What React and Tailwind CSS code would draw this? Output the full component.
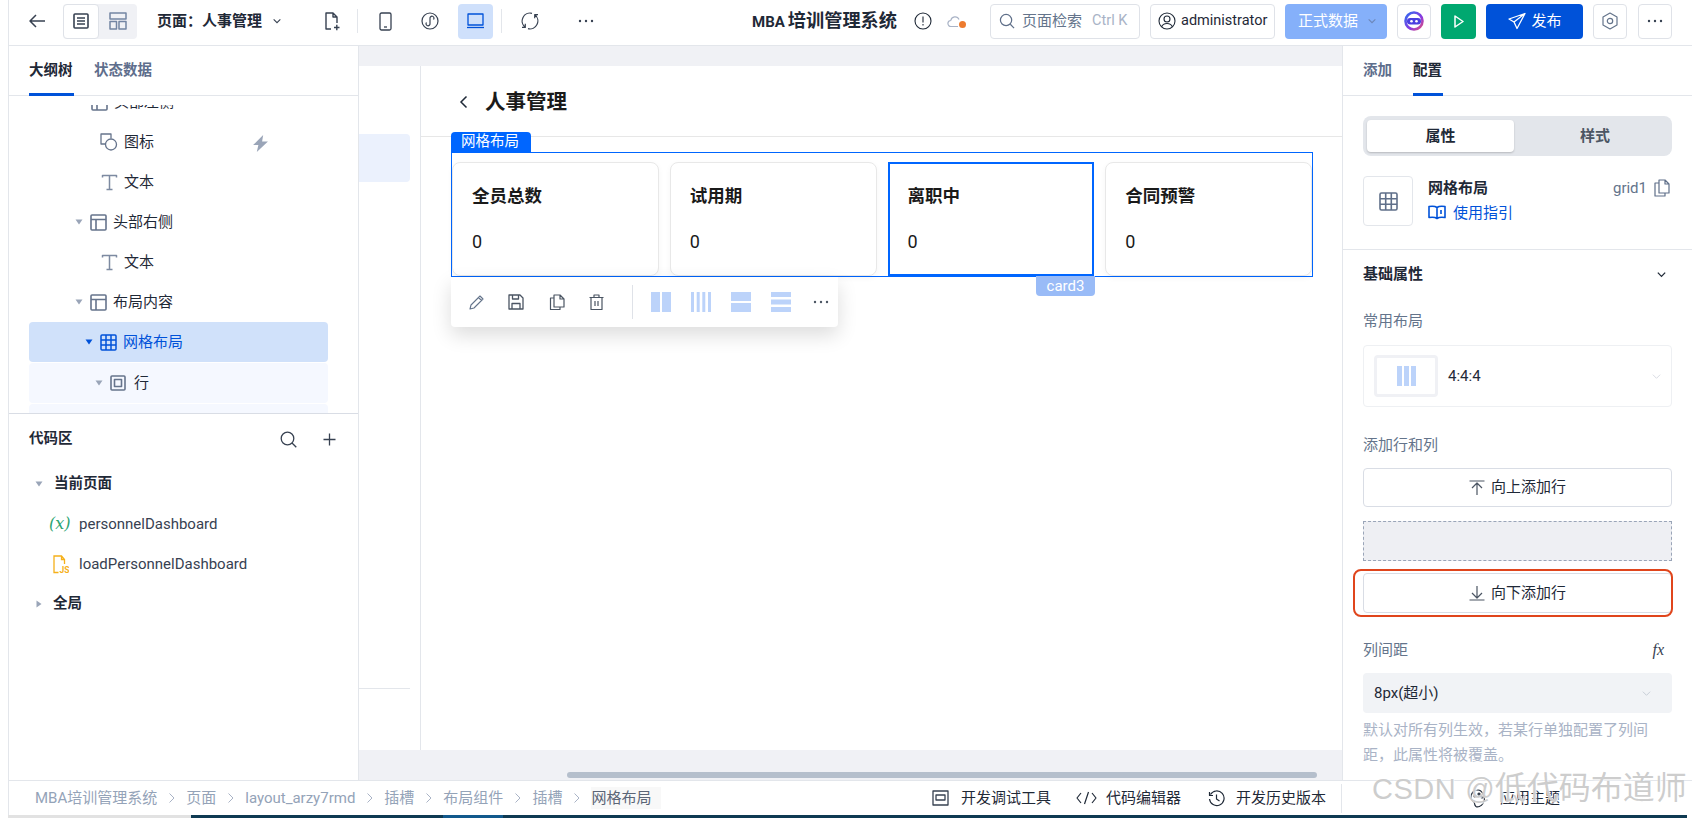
import React from "react";

const S = ({ w = 20, h, c = "#1f2937", sw = 1.5, vb = "0 0 24 24", children, className = "" }) => (
  <svg width={w} height={h || w} viewBox={vb} fill="none" stroke={c} strokeWidth={sw} strokeLinecap="butt" strokeLinejoin="round" className={`shrink-0 ${className}`}>
    {children}
  </svg>
);

const Caret = ({ c = "#9aa5b8" }) => (
  <svg width="8" height="6" viewBox="0 0 8 6" className="shrink-0"><path d="M0.5 0.5h7L4 5.5z" fill={c} /></svg>
);
const CaretR = () => (
  <svg width="6" height="8" viewBox="0 0 6 8" className="shrink-0"><path d="M0.5 0.5v7L5.5 4z" fill="#9aa5b8" /></svg>
);
const Chev = ({ w = 12, c = "#374151", sw = 1.3 }) => (
  <svg width={w} height={w} viewBox="0 0 12 12" fill="none" stroke={c} strokeWidth={sw} className="shrink-0"><path d="M2 4l4 4 4-4" /></svg>
);
const BreadSep = () => (
  <svg width="8" height="12" viewBox="0 0 8 12" fill="none" stroke="#a9b3c6" strokeWidth="1" className="shrink-0"><path d="M1.5 1.5L6 6l-4.5 4.5" /></svg>
);

const PanelIcon = () => (
  <S w={17} c="#66748c" sw={1.6} vb="0 0 17 17">
    <rect x="1" y="1" width="15" height="15" rx="1" /><path d="M1 5.5h15M6 5.5V16" />
  </S>
);
const TIcon = () => (
  <S w={17} c="#7d8aa1" sw={1.5} vb="0 0 17 17"><path d="M1.5 3.5V1.5h14v2M8.5 1.5v14M5.5 15.5h6" /></S>
);
const GridIcon = ({ c = "#0052d9", w = 17 }) => (
  <S w={w} c={c} sw={1.5} vb="0 0 17 17">
    <rect x="1" y="1" width="15" height="15" rx="1" /><path d="M1 6h15M1 11h15M6 1v15M11 1v15" />
  </S>
);

const TreeRow = ({ pl, caret, icon, label, active, tint, right, gap = 6 }) => (
  <div className={`relative h-10 flex items-center ml-5 mr-[30px] rounded ${active ? "bg-[#d0e1fa] text-[#0052d9]" : tint ? "bg-[#f5f8ff]" : ""}`} style={{ paddingLeft: pl }}>
    {caret !== undefined && <span className="w-[8px] mr-[7px] flex items-center">{caret}</span>}
    {icon}
    <span style={{ marginLeft: gap }}>{label}</span>
    {right}
  </div>
);

const TopBtn = ({ className = "", children }) => (
  <div className={`h-[35px] flex items-center justify-center rounded shrink-0 ${className}`}>{children}</div>
);

const ToolBlock = ({ children }) => (
  <svg width="20" height="20" viewBox="0 0 20 20" fill="#bcd3fa" className="shrink-0">{children}</svg>
);

const Card = ({ title, selected }) => (
  <div className={`h-[114px] bg-white ${selected ? "border-2 border-[#0066ff] pl-[18px] pr-5 pt-[18px]" : "px-[19px] pt-[19px] rounded-lg border border-[#e8e8e8] shadow-[0_2px_6px_rgba(0,0,0,0.04)]"}`}>
    <div className="text-[17.5px] leading-[28px] font-bold text-[#1a1a1a]">{title}</div>
    <div className="mt-[18px] text-[18px] leading-[28px] text-[#1a1a1a]">0</div>
  </div>
);

export default function App() {
  return (
    <div className="relative w-[1692px] h-[818px] overflow-hidden bg-white flex flex-col text-[15px] text-[#1f2937]" style={{ fontFamily: 'Roboto, "Noto Sans CJK SC", sans-serif' }}>
      <div className="h-[815px] flex shrink-0">
        <div className="w-2 shrink-0 bg-white" />
        <div className="flex-1 min-w-0 flex flex-col border-l border-[#e3e6eb]">
          {/* top bar */}
          <header className="h-[46px] shrink-0 border-b border-[#e3e6eb] flex items-center pb-[3px]">
            <span className="ml-[19px]">
              <S w={18} c="#374151" sw={1.5} vb="0 0 18 18"><path d="M17 9H2M8 3L2 9l6 6" /></S>
            </span>
            <div className="ml-[17px] flex h-[35px] w-[74px] bg-[#f0f1f5] rounded">
              <div className="w-[36px] bg-white border border-[#dfe2e8] rounded flex items-center justify-center">
                <S w={16} c="#374151" sw={1.6} vb="0 0 16 16"><rect x="1" y="1" width="14" height="14" rx="1" /><path d="M4 5h8M4 8h8M4 11h8" /></S>
              </div>
              <div className="w-[38px] flex items-center justify-center">
                <S w={18} c="#7385a3" sw={1.5} vb="0 0 18 18"><rect x="1" y="1" width="16" height="6" /><rect x="1" y="9.5" width="6.5" height="7.5" /><rect x="10" y="9.5" width="7" height="7.5" /></S>
              </div>
            </div>
            <div className="ml-[20px] font-semibold text-[15px] text-[#1f2937]">页面：人事管理</div>
            <span className="ml-[10px]"><Chev w={10} /></span>
            <span className="ml-[42px]">
              <S w={16} h={19} c="#374151" sw={1.4} vb="0 0 16 19"><path d="M7 17H2V1h7l4 4v6M9 1v4h4M10 15.5h5.5M12.8 12.8v5.5" /></S>
            </span>
            <span className="ml-[17px] w-px h-6 bg-[#e3e6eb]" />
            <span className="ml-[21px]">
              <S w={13} h={19} c="#374151" sw={1.3} vb="0 0 13 19"><rect x="1" y="1" width="11" height="17" rx="1.5" /><path d="M5 15h3" /></S>
            </span>
            <span className="ml-[29px]">
              <S w={18} c="#374151" sw={1.2} vb="0 0 18 18"><circle cx="9" cy="9" r="8" /><path d="M5.5 10.5a2 2 0 1 0 3.5 1V6.5a2 2 0 1 1 3.5 1" /></S>
            </span>
            <TopBtn className="ml-[19px] w-[35px] bg-[#cfe0fb]">
              <S w={19} h={16} c="#0052d9" sw={1.3} vb="0 0 19 16"><rect x="2" y="1" width="15" height="11" /><path d="M1 14.5h17" /></S>
            </TopBtn>
            <span className="ml-[8px] w-px h-6 bg-[#e3e6eb]" />
            <span className="ml-[19px]">
              <S w={18} c="#374151" sw={1.2} vb="0 0 18 18"><path d="M11 1.3A8 8 0 0 0 4 15.2M4.3 11.8v3.6H1M7 16.7A8 8 0 0 0 14 2.8M13.7 6.2V2.6H17" /></S>
            </span>
            <span className="ml-[39px]">
              <svg width="16" height="4" viewBox="0 0 16 4" fill="#374151"><circle cx="2" cy="2" r="1.2" /><circle cx="8" cy="2" r="1.2" /><circle cx="14" cy="2" r="1.2" /></svg>
            </span>
            <div className="ml-[158px] font-bold text-[18.2px] text-[#1f2937] w-[147px] whitespace-nowrap flex items-baseline">
              <span className="text-[15px] mr-[3px]">MBA</span>培训管理系统
            </div>
            <span className="ml-[15px]">
              <S w={18} c="#1f2937" sw={1.1} vb="0 0 18 18"><circle cx="9" cy="9" r="8" /><path d="M9 4.5v6M9 12v1.5" /></S>
            </span>
            <span className="ml-[15px] relative">
              <S w={17} h={14} c="#a9b3c6" sw={1.2} vb="0 0 17 14"><path d="M11 12.5H4A3 3 0 0 1 3.8 6.5 4.3 4.3 0 0 1 12 5.5" /></S>
              <span className="absolute right-[-2px] bottom-0 w-[7px] h-[7px] rounded-full bg-[#ed7b2f]" />
            </span>
            <div className="ml-[26px] w-[150px] h-[35px] rounded border border-[#dfe2e8] flex items-center pl-[8px] shrink-0">
              <S w={16} c="#5f6f89" sw={1.3} vb="0 0 17 17"><circle cx="7.5" cy="7.5" r="6" /><path d="M12 12l4 4" /></S>
              <span className="ml-[7px] text-[15px] text-[#64748b]">页面检索</span>
              <span className="ml-[10px] text-[14.5px] text-[#a9b3c6] whitespace-nowrap">Ctrl K</span>
            </div>
            <div className="ml-[10px] w-[125px] h-[35px] rounded border border-[#dfe2e8] flex items-center pl-[7px] shrink-0">
              <S w={18} c="#1f2937" sw={1.1} vb="0 0 18 18"><circle cx="9" cy="9" r="8" /><circle cx="9" cy="7" r="3" /><path d="M3.5 15c1-2.6 3-3.5 5.5-3.5s4.5.9 5.5 3.5" /></S>
              <span className="ml-[5px] text-[14.5px] text-[#1f2937]">administrator</span>
            </div>
            <div className="ml-[10px] w-[102px] h-[35px] rounded bg-[#85b0fa] flex items-center pl-[13px] shrink-0 text-white text-[15px]">
              正式数据
              <span className="ml-[9px]"><Chev w={10} c="#6c86b8" /></span>
            </div>
            <div className="ml-[10px] w-[34px] h-[35px] rounded border border-[#dfe2e8] flex items-center justify-center shrink-0">
              <svg width="20" height="20" viewBox="0 0 20 20">
                <defs><linearGradient id="rb" x1="0" y1="0" x2="1" y2="1"><stop offset="0" stopColor="#2f6df0" /><stop offset="0.6" stopColor="#8a3ae0" /><stop offset="1" stopColor="#e0507a" /></linearGradient></defs>
                <circle cx="10" cy="10" r="8.5" fill="white" stroke="url(#rb)" strokeWidth="2.6" />
                <rect x="3" y="7" width="14" height="6.5" rx="3.2" fill="#4a3fe0" />
                <circle cx="7.5" cy="10.2" r="1.3" fill="white" /><circle cx="12.5" cy="10.2" r="1.3" fill="white" />
              </svg>
            </div>
            <div className="ml-[10px] w-[35px] h-[35px] rounded bg-[#00a870] flex items-center justify-center shrink-0">
              <S w={10} h={13} c="white" sw={1.5} vb="0 0 10 13"><path d="M1 1l8 5.5L1 12z" /></S>
            </div>
            <div className="ml-[10px] w-[97px] h-[35px] rounded bg-[#0052d9] flex items-center justify-center shrink-0 text-white text-[15px]">
              <S w={18} c="white" sw={1.3} vb="0 0 18 18"><path d="M17 1.5L1 7l5 3 3 6.5zM17 1.5L6 10" /></S>
              <span className="ml-[6px]">发布</span>
            </div>
            <div className="ml-[10px] w-[34px] h-[35px] rounded border border-[#dfe2e8] flex items-center justify-center shrink-0">
              <S w={18} c="#64748b" sw={1.2} vb="0 0 18 18"><path d="M9 1l7 4v8l-7 4-7-4V5z" /><circle cx="9" cy="9" r="2.7" /></S>
            </div>
            <div className="ml-[11px] w-[34px] h-[35px] rounded border border-[#dfe2e8] flex items-center justify-center shrink-0">
              <svg width="16" height="4" viewBox="0 0 16 4" fill="#374151"><circle cx="2" cy="2" r="1.2" /><circle cx="8" cy="2" r="1.2" /><circle cx="14" cy="2" r="1.2" /></svg>
            </div>
          </header>

          {/* middle */}
          <div className="flex-1 min-h-0 flex">
            {/* left */}
            <aside className="w-[350px] shrink-0 border-r border-[#e3e6eb] flex flex-col bg-white">
              <div className="h-[50px] shrink-0 border-b border-[#e3e6eb] flex px-5 gap-[20px]">
                <div className="h-[50px] pt-[14px] w-[45px] border-b-[3px] border-[#0052d9] font-bold text-[14.5px] text-[#1f2937] leading-[22px] whitespace-nowrap">大纲树</div>
                <div className="pt-[14px] font-semibold text-[14.5px] text-[#5e6e8c] leading-[22px] whitespace-nowrap">状态数据</div>
              </div>
              <div className="mt-[9px] h-[308px] shrink-0 overflow-hidden">
                <div className="-mt-[23px]">
                  <TreeRow pl={62} icon={<PanelIcon />} label="头部左侧" />
                  <TreeRow pl={71} icon={
                    <S w={18} c="#66748c" sw={1.3} vb="0 0 18 18"><path d="M11 5.5V1H1v10h4.5" /><circle cx="11" cy="11.5" r="5.5" /></S>
                  } label="图标" right={
                    <svg width="17" height="17" viewBox="0 0 16 16" fill="#9aa5b8" className="absolute left-[223px] top-[13px]"><path d="M10.5 0L1 9.5h5L4.5 16 15 6H9.5z" /></svg>
                  } />
                  <TreeRow pl={72} icon={<TIcon />} label="文本" />
                  <TreeRow pl={46} caret={<Caret />} icon={<PanelIcon />} label="头部右侧" />
                  <TreeRow pl={72} icon={<TIcon />} label="文本" />
                  <TreeRow pl={46} caret={<Caret />} icon={<PanelIcon />} label="布局内容" />
                  <TreeRow pl={56} caret={<Caret c="#0052d9" />} icon={<GridIcon />} label="网格布局" active />
                  <div className="h-px" />
                  <TreeRow pl={66} gap={8} caret={<Caret />} icon={
                    <S w={16} c="#66748c" sw={1.6} vb="0 0 16 16"><rect x="1" y="1" width="14" height="14" rx="1" /><rect x="4.5" y="4.5" width="7" height="7" /></S>
                  } label="行" tint />
                  <div className="h-10 ml-5 mr-[30px] mt-px rounded bg-[#f5f8ff]" />
                </div>
              </div>
              <div className="flex-1 min-h-0 border-t border-[#d9dde5] px-5">
                <div className="h-[50px] flex items-center justify-between">
                  <span className="font-bold text-[14.5px]">代码区</span>
                  <span className="flex items-center gap-[26px] pr-[2px]">
                    <S w={17} c="#374151" sw={1.3} vb="0 0 17 17"><circle cx="7.5" cy="7.5" r="6.3" /><path d="M12 12l4.3 4.3" /></S>
                    <S w={13} c="#374151" sw={1.3} vb="0 0 13 13"><path d="M6.5 0.5v12M0.5 6.5h12" /></S>
                  </span>
                </div>
                <div className="h-10 flex items-center font-bold text-[14.5px] pl-[6px]">
                  <Caret /><span className="ml-[11px]">当前页面</span>
                </div>
                <div className="h-10 flex items-center">
                  <span className="w-[50px] pl-[20px] text-[#2ba471] italic text-[16px] whitespace-nowrap" style={{ fontFamily: '"DejaVu Serif", serif' }}>(x)</span>
                  <span className="text-[15px] text-[#374151]">personnelDashboard</span>
                </div>
                <div className="h-10 flex items-center">
                  <span className="w-[50px] pl-[24px] flex">
                    <svg width="16" height="19" viewBox="0 0 16 19" fill="none" stroke="#f5b01a" strokeWidth="1.3">
                      <path d="M5.5 17.5H1V1h7.5l3 3.5V9M8.5 1v3.5h3" />
                      <text x="6.5" y="17.5" fontSize="8.5" fill="#f5b01a" stroke="none" fontWeight="700" fontFamily="Roboto">JS</text>
                    </svg>
                  </span>
                  <span className="text-[15px] text-[#374151]">loadPersonnelDashboard</span>
                </div>
                <div className="h-10 flex items-center font-bold text-[14.5px] pl-[7px]">
                  <CaretR /><span className="ml-[11px]">全局</span>
                </div>
              </div>
            </aside>

            {/* canvas */}
            <main className="flex-1 min-w-0 bg-[#f0f1f5] flex flex-col pt-[20px]">
              <div className="h-[684px] shrink-0 bg-white flex">
                <div className="w-[62px] shrink-0 border-r border-[#e3e6eb] flex flex-col">
                  <div className="mt-[68px] h-[48px] w-[51px] bg-[#ebf1fd] rounded-r" />
                  <div className="mt-[506px] h-px w-[51px] bg-[#e3e6eb]" />
                </div>
                <div className="flex-1 min-w-0">
                  <div className="h-[71px] border-b border-[#e7e7e7] flex items-center pl-[38px] pt-[2px]">
                    <svg width="10" height="14" viewBox="0 0 10 14" fill="none" stroke="#1f2937" strokeWidth="1.5"><path d="M7.5 1.5L2 7l5.5 5.5" /></svg>
                    <span className="ml-[16px] text-[20.5px] font-bold text-[#1a1a1a]">人事管理</span>
                  </div>
                  <div className="ml-[30px] mt-[15px] relative w-[862px] h-[125px] border border-[#0066ff] pt-[9px]">
                    <div className="absolute left-[-1px] top-[-21px] w-[80px] h-[20px] bg-[#0066ff] rounded-t text-white text-[14.5px] leading-[20px] text-center pr-[2px]">网格布局</div>
                    <div className="grid grid-cols-4 gap-[11px]">
                      <Card title="全员总数" />
                      <Card title="试用期" />
                      <Card title="离职中" selected />
                      <Card title="合同预警" />
                    </div>
                    <div className="absolute left-[584px] top-[123px] w-[59px] h-[20px] bg-[#99bbf7] rounded-b text-white text-[15px] leading-[20px] text-center">card3</div>
                    <div className="absolute left-[-1px] top-[124px] w-[387px] h-[50px] bg-white rounded-b shadow-[0_8px_20px_rgba(0,0,0,0.14)] flex items-center">
                      <span className="ml-[18px]">
                        <S w={15} c="#64748b" sw={1.1} vb="0 0 15 15"><path d="M1 14l1-4L11 1l3 3-9 9zM9.5 2.5l3 3" /></S>
                      </span>
                      <span className="ml-[24px]">
                        <S w={16} c="#4b5563" sw={1.3} vb="0 0 16 16"><path d="M1 1h11l3 3v11H1zM4.5 1v4h6V1M4 15v-5.5h8V15" /></S>
                      </span>
                      <span className="ml-[25px]">
                        <S w={16} c="#4b5563" sw={1.2} vb="0 0 16 16"><path d="M5 1h6l4 4v8H5zM11 1v4h4M5 4H1.5v11.5H11V13" /></S>
                      </span>
                      <span className="ml-[24px]">
                        <S w={15} h={16} c="#4b5563" sw={1.2} vb="0 0 15 16"><path d="M0.5 3.5h14M2 3.5V15.5h11V3.5M5 3.5V1h5v2.5M6 7v5M9 7v5" /></S>
                      </span>
                      <span className="ml-[28px] w-px h-[34px] bg-[#dfe2e8]" />
                      <span className="ml-[18px]"><ToolBlock><rect x="0" y="0" width="9" height="20" /><rect x="11" y="0" width="9" height="20" /></ToolBlock></span>
                      <span className="ml-[20px]"><ToolBlock><rect x="0" y="0" width="3" height="20" /><rect x="5.7" y="0" width="3" height="20" /><rect x="11.3" y="0" width="3" height="20" /><rect x="17" y="0" width="3" height="20" /></ToolBlock></span>
                      <span className="ml-[20px]"><ToolBlock><rect x="0" y="0" width="20" height="9" /><rect x="0" y="11" width="20" height="9" /></ToolBlock></span>
                      <span className="ml-[20px]"><ToolBlock><rect x="0" y="0" width="20" height="5" /><rect x="0" y="7.5" width="20" height="5" /><rect x="0" y="15" width="20" height="5" /></ToolBlock></span>
                      <span className="ml-[22px]">
                        <svg width="16" height="4" viewBox="0 0 16 4" fill="#4b5563"><circle cx="2" cy="2" r="1.2" /><circle cx="8" cy="2" r="1.2" /><circle cx="14" cy="2" r="1.2" /></svg>
                      </span>
                    </div>
                  </div>
                </div>
              </div>
              <div className="flex-1 relative">
                <div className="absolute left-[208px] top-[22px] w-[750px] h-[6px] rounded-full bg-[#b5bfcc]" />
              </div>
            </main>

            {/* right */}
            <aside className="w-[350px] shrink-0 border-l border-[#e3e6eb] bg-white flex flex-col relative overflow-hidden">
              <div className="h-[50px] shrink-0 border-b border-[#e3e6eb] flex px-5 gap-[21px]">
                <div className="pt-[14px] font-semibold text-[14.5px] text-[#5e6e8c] leading-[22px]">添加</div>
                <div className="h-[50px] pt-[14px] w-[30px] border-b-[3px] border-[#0052d9] font-bold text-[14.5px] leading-[22px] whitespace-nowrap">配置</div>
              </div>
              <div className="mx-5 mt-[20px] h-10 rounded-lg bg-[#e3e6eb] p-1 flex">
                <div className="w-[147px] rounded bg-white shadow-[0_1px_2px_rgba(0,0,0,0.2)] flex items-center justify-center font-bold">属性</div>
                <div className="flex-1 flex items-center justify-center font-semibold text-[#4b5563] pl-[8px]">样式</div>
              </div>
              <div className="h-[73px] shrink-0 border-b border-[#e3e6eb] px-5 pt-[20px] flex relative box-content">
                <div className="w-[50px] h-[50px] rounded border border-[#e3e6eb] flex items-center justify-center">
                  <S w={19} c="#5f6f89" sw={1.6} vb="0 0 19 19"><rect x="1" y="1" width="17" height="17" rx="1.5" /><path d="M1 6.7h17M1 12.3h17M6.7 1v17M12.3 1v17" /></S>
                </div>
                <div className="ml-[15px] flex-1">
                  <div className="font-bold leading-[24px] flex items-center justify-between pr-[2px]">
                    网格布局
                    <span className="flex items-center font-normal text-[#64748b]">grid1
                      <span className="ml-[7px]">
                        <S w={16} h={18} c="#5f6f89" sw={1.2} vb="0 0 16 18"><path d="M5 1h6l4 4v9H5zM11 1v4h4M5 4H1v13h10v-3" /></S>
                      </span>
                    </span>
                  </div>
                  <div className="mt-[1px] flex items-center text-[#0052d9] leading-[24px]">
                    <S w={18} h={16} c="#0052d9" sw={1.6} vb="0 0 18 16"><path d="M9 2.5C7 1 4 1 1 1.5v11c3-.5 6-.5 8 1 2-1.5 5-1.5 8-1v-11c-3-.5-6-.5-8 1zM9 2.5v11M13 5v4" /></S>
                    <span className="ml-[7px]">使用指引</span>
                  </div>
                </div>
              </div>
              <div className="h-[48px] shrink-0 px-5 flex items-center justify-between">
                <span className="font-bold">基础属性</span>
                <span className="pr-[5px]"><Chev w={11} c="#1f2937" sw={1.4} /></span>
              </div>
              <div className="px-5 text-[#64748b] leading-[24px] mt-[11px]">常用布局</div>
              <div className="mx-5 mt-[12px] h-[62px] shrink-0 rounded border border-[#eef0f3] flex items-center pl-[10px] relative">
                <div className="w-[64px] h-[42px] border-[3px] border-[#f0f1f5] rounded flex items-center justify-center gap-[2px]">
                  <span className="w-[5px] h-[20px] bg-[#bcd3fa]" /><span className="w-[5px] h-[20px] bg-[#bcd3fa]" /><span className="w-[5px] h-[20px] bg-[#bcd3fa]" />
                </div>
                <span className="ml-[10px]">4:4:4</span>
                <span className="absolute right-[9px] top-[25px]"><Chev w={11} c="#d5d9e0" sw={1} /></span>
              </div>
              <div className="px-5 mt-[26px] text-[#64748b] leading-[24px]">添加行和列</div>
              <div className="mx-5 mt-[11px] h-[39px] shrink-0 rounded border border-[#d9dde5] flex items-center justify-center">
                <S w={16} c="#4b5563" sw={1.2} vb="0 0 16 16"><path d="M0.5 1h15M8 15V3.5M3 8l5-5 5 5" /></S>
                <span className="ml-[6px]">向上添加行</span>
              </div>
              <div className="mx-5 mt-[14px] h-10 shrink-0 border border-dashed border-[#9aa5b8] bg-[#eeeff3]" />
              <div className="mx-5 mt-[12px] h-10 shrink-0 rounded border border-[#d9dde5] flex items-center justify-center relative">
                <S w={16} c="#4b5563" sw={1.2} vb="0 0 16 16"><path d="M0.5 15h15M8 1v11.5M3 8l5 5 5-5" /></S>
                <span className="ml-[6px]">向下添加行</span>
                <div className="absolute left-[-11px] right-[-2px] top-[-5px] bottom-[-5px] rounded-lg border-2 border-[#e0451c]" />
              </div>
              <div className="px-5 mt-[25px] flex items-center justify-between text-[#64748b] leading-[24px]">
                列间距
                <span className="pr-[8px] text-[#374151] italic text-[16px] leading-[24px]" style={{ fontFamily: '"Liberation Serif", serif' }}>fx</span>
              </div>
              <div className="mx-5 mt-[11px] h-10 shrink-0 rounded bg-[#f1f3f6] flex items-center justify-between pl-[11px] pr-[20px] text-[#1f2937]">
                8px(超小)
                <Chev w={11} c="#c4cad4" sw={1} />
              </div>
              <div className="px-5 mt-[5px] text-[#a9b3c6] leading-[25px]">默认对所有列生效，若某行单独配置了列间距，此属性将被覆盖。</div>
            </aside>
          </div>

          {/* footer */}
          <footer className="h-[35px] shrink-0 border-t border-[#e3e6eb] flex items-center bg-white text-[15px]">
            <div className="ml-[26px] flex items-center text-[#94a3b8] whitespace-nowrap">
              <span>MBA培训管理系统</span><span className="mx-[10.5px]"><BreadSep /></span>
              <span>页面</span><span className="mx-[10.5px]"><BreadSep /></span>
              <span>layout_arzy7rmd</span><span className="mx-[10.5px]"><BreadSep /></span>
              <span>插槽</span><span className="mx-[10.5px]"><BreadSep /></span>
              <span>布局组件</span><span className="mx-[10.5px]"><BreadSep /></span>
              <span>插槽</span><span className="mx-[10.5px]"><BreadSep /></span>
              <span className="text-[#5b6577] bg-[#f8f8f8] pr-[10px]">网格布局</span>
            </div>
            <div className="ml-auto flex items-center text-[#1f2937] whitespace-nowrap">
              <S w={17} h={16} c="#374151" sw={1.3} vb="0 0 17 16"><rect x="1" y="1" width="15" height="14" /><rect x="4" y="5" width="9" height="5" /></S>
              <span className="ml-[12px]">开发调试工具</span>
              <span className="ml-[25px]">
                <S w={21} h={16} c="#1f2937" sw={1.2} vb="0 0 21 16"><path d="M5 3L1 8l4 5M16 3l4 5-4 5M12.5 2l-4 12" /></S>
              </span>
              <span className="ml-[9px]">代码编辑器</span>
              <span className="ml-[27px]">
                <S w={17} c="#1f2937" sw={1.2} vb="0 0 17 17"><path d="M2.5 4.5A7.3 7.3 0 1 1 1.5 9M1.5 2v3.5h3.5M8.5 4.5V9l3 2" /></S>
              </span>
              <span className="ml-[11px]">开发历史版本</span>
              <span className="ml-[15px] w-px h-[29px] bg-[#e3e6eb]" />
              <span className="ml-[128px]">
                <S w={16} h={19} c="#1f2937" sw={1.2} vb="0 0 16 19"><path d="M8 1C4 1 1 4 1 8c0 4 2 4 3 5 1 1 0 3 2 4.5 1.5 1 5 0 7-3 2-3 2-6 0-9.5C12 3 10 1 8 1z" /><circle cx="5" cy="7" r="1" /><circle cx="9" cy="5" r="1" /><circle cx="12" cy="8" r="1" /></S>
              </span>
              <span className="ml-[14px] mr-[132px]">应用主题</span>
            </div>
          </footer>
        </div>
      </div>
      {/* window edge under the page */}
      <div className="h-[3px] shrink-0 flex">
        <div className="w-2 bg-white" />
        <div className="w-[183px] bg-[#e2e2e2]" />
        <div className="w-[252px] bg-[#0f3a52]" />
        <div className="w-[60px] bg-[#12598c]" />
        <div className="w-[1184px] bg-[#0f3a52]" />
        <div className="w-[5px] bg-white" />
      </div>
      {/* watermark */}
      <div className="absolute left-[1372px] top-[766px] flex items-baseline whitespace-nowrap text-[#9b9b9b]/50 leading-[44px]" style={{ textShadow: "0 0 1px #fff, 1px 1px 1px rgba(255,255,255,.8)", fontFamily: '"Liberation Sans", "Noto Sans CJK SC", sans-serif' }}>
        <span className="text-[29px] tracking-[0.5px]">CSDN</span>
        <span className="text-[29px] ml-[9px]">@</span>
        <span className="text-[32px]">低代码布道师</span>
      </div>
    </div>
  );
}
